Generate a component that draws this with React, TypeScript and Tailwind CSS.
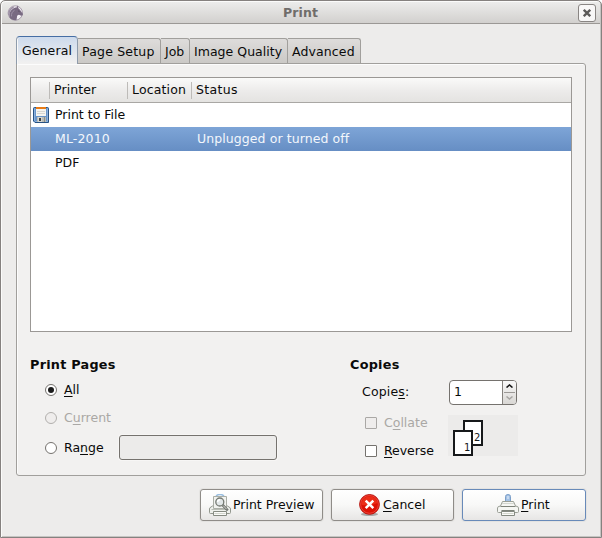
import React from "react";

const INACTIVE_TABS = [
  { label: "Page Setup", width: "w-[83px]", tracking: "tracking-[0.2px]" },
  { label: "Job", width: "w-[29px]", tracking: "tracking-[0px]" },
  { label: "Image Quality", width: "w-[98px]", tracking: "tracking-[0.03px]" },
  { label: "Advanced", width: "w-[73px]", tracking: "tracking-[0.12px]" },
];

function U({ children }: { children: React.ReactNode }) {
  return <span className="underline decoration-1 underline-offset-2">{children}</span>;
}

function HorseIcon() {
  return (
    <svg width="18" height="18" viewBox="0 0 18 18" className="block">
      <circle cx="8.3" cy="9" r="7.2" fill="#f3eff5" stroke="#a79cab" strokeWidth="1" />
      <path
        d="M2.6 13.6 C1.6 10.6 2.6 7 5.6 5 C7 4 8.6 3.6 9.6 3.6 L10.8 1.4 L11.4 4.2 C13 5.2 13.8 7 15.8 9.8 C16.2 10.8 15.4 12 14.2 11.8 L12 10.8 C10.6 11 9.8 11.8 10 13 L9.4 16.2 C6.6 16.6 3.8 15.6 2.6 13.6Z"
        fill="#796a82"
      />
      <path d="M1.9 11 C1.8 7.4 3.6 4.4 6.6 3" fill="none" stroke="#9c8fa4" strokeWidth="1.6" />
      <path d="M4.6 12.4 C4.2 9.6 5.2 7.6 7.6 6.2" fill="none" stroke="#a295aa" strokeWidth=".9" />
      <path d="M11.4 7 L12.4 7.6" fill="none" stroke="#463a4d" strokeWidth=".9" />
    </svg>
  );
}

function FloppyIcon() {
  return (
    <svg width="16" height="16" viewBox="0 0 16 16">
      <path d="M1.5 .5 H14.5 Q15.5 .5 15.5 1.5 V15.5 H2 L.5 14 V1.5 Q.5 .5 1.5 .5Z" fill="#6794c9" stroke="#285384" />
      <path d="M1.5 1.5 V13.6 L2.5 14.5 H14.5 V1.5" fill="none" stroke="#8cb2df" />
      <rect x="3" y="0" width="10" height="9" fill="#f4f4f0" />
      <rect x="3" y="0" width="10" height="2" fill="#e77b17" />
      <path d="M4 4.5 H12 M4 6.5 H12" stroke="#d6d6d2" />
      <rect x="4" y="10" width="9" height="5" fill="#b9bbb6" />
      <rect x="5" y="10" width="4" height="5" fill="#d5d6d2" />
      <rect x="6" y="11" width="2" height="3" fill="#3b4041" />
      <path d="M11.5 10 V15" stroke="#8b8e88" />
    </svg>
  );
}

function PrinterIcon({ preview = false }: { preview?: boolean }) {
  return (
    <svg width="22" height="22" viewBox="0 0 22 22" className="shrink-0">
      {preview ? (
        <>
          <path d="M7 2 Q11 -1.2 15 2" fill="none" stroke="#98bddf" strokeWidth="1.5" />
          <path
            d="M3.5 12 L2 13 Q.5 13.6 .5 15 V18.5 Q.5 19.5 1.5 19.5 H20.5 Q21.5 19.5 21.5 18.5 V15 Q21.5 13.6 20 13 L18.5 12Z"
            fill="#eef0ec"
            stroke="#92978e"
          />
          <path d="M4.5 14.5 V2.5 H17.5 V14.5Z" fill="#f1f2ef" stroke="#aaaea6" />
          <path d="M2.5 15.5 H19.5" stroke="#b9bdb5" />
        </>
      ) : (
        <>
          <path d="M8.5 8 V2.5 Q8.5 .5 11 .5 Q13.5 .5 13.5 2.5 V8" fill="#a3c1e4" stroke="#7c9fc9" />
          <path d="M11 2 V5" stroke="#e9f1fa" />
          <path
            d="M5.5 7.5 H16.5 L18.5 12 Q21.5 12.2 21.5 14 V17.5 Q21.5 18.5 20.5 18.5 H1.5 Q.5 18.5 .5 17.5 V14 Q.5 12.2 3.5 12Z"
            fill="#f5f6f3"
            stroke="#9a9f96"
          />
          <path d="M5 9.5 H17" stroke="#d3d6cf" />
          <path d="M3.5 12.5 H18.5" stroke="#7e837a" />
          <path d="M4.5 16.5 H17.5" stroke="#7d827a" />
        </>
      )}
      <path d="M4.5 21.5 V17.5 H17.5 V21.5Z" fill="#fafaf8" stroke="#858a81" />
      <path d="M5.5 19.5 H16.5" stroke="#d3d7ce" />
      {preview && (
        <>
          <path d="M13.6 11 L18 15.6" stroke="#6f736e" strokeWidth="2.6" strokeLinecap="round" />
          <path d="M14.2 11.6 L17.6 15.2" stroke="#d9dad6" strokeWidth="1" />
          <circle cx="10.8" cy="8" r="4" fill="#e2e7e8" stroke="#757a73" strokeWidth="1.3" />
          <path d="M8.6 8 Q8.8 5.8 11 5.8" fill="none" stroke="#fff" strokeWidth="1.4" />
        </>
      )}
    </svg>
  );
}

function CancelIcon() {
  return (
    <svg width="22" height="22" viewBox="0 0 22 22" className="shrink-0">
      <ellipse cx="10.5" cy="20.2" rx="8.5" ry="1.8" fill="#858585" opacity=".65" />
      <circle cx="10.5" cy="10.4" r="9.9" fill="#dc1206" stroke="#b00b05" strokeWidth=".9" />
      <circle cx="10.5" cy="10.4" r="8.9" fill="none" stroke="#ee4a3f" strokeWidth=".9" />
      <path d="M2.5 9 Q4 2.6 10.5 2.2 Q17 2.6 18.5 9 Q12.5 12 2.5 11Z" fill="#f23c22" opacity=".65" />
      <path d="M6.7 6.6 L14.3 14.2 M14.3 6.6 L6.7 14.2" stroke="#fff" strokeWidth="2.5" />
    </svg>
  );
}

function CollateIcon() {
  return (
    <svg width="70" height="41" viewBox="0 0 70 41" className="block">
      <rect width="70" height="41" fill="#ecebea" />
      <rect x="16" y="6" width="18" height="24" fill="#fff" stroke="#17191b" strokeWidth="2" />
      <text x="26" y="26" fontFamily="DejaVu Sans" fontSize="10" fill="#17191b">2</text>
      <rect x="6" y="16" width="18" height="24" fill="#fff" stroke="#17191b" strokeWidth="2" />
      <text x="16" y="36" fontFamily="DejaVu Sans" fontSize="10" fill="#17191b">1</text>
    </svg>
  );
}

function Radio({ checked = false, disabled = false }: { checked?: boolean; disabled?: boolean }) {
  return (
    <span
      className={`flex size-[12px] items-center justify-center rounded-full border ${
        disabled ? "border-[#b2b0ad] bg-[#efedec]" : "border-[#75726e] bg-white"
      }`}
    >
      {checked && <span className="size-[6px] rounded-full bg-[#1b1b1b]" />}
    </span>
  );
}

function Check({ disabled = false }: { disabled?: boolean }) {
  return (
    <span
      className={`size-[12px] rounded-[1px] border ${
        disabled ? "border-[#aaa8a5] bg-[#efedec]" : "border-[#75726e] bg-white"
      }`}
    />
  );
}

const BUTTON =
  "flex h-[32px] items-center rounded-[3px] border bg-linear-to-b from-white via-[#f8f8f7] via-50% to-[#e7e6e5] shadow-[0_0_0_1px_#e4e3e1]";

export default function App() {
  return (
    <div className="h-[538px] w-[602px] overflow-hidden bg-white font-['DejaVu_Sans',sans-serif] text-[12.5px] leading-[16px] text-[#0a0a0a]">
      <div className="flex h-full flex-col rounded-t-[5px] border border-[#85817f] bg-[#edeceb] shadow-[inset_1px_1px_0_#fbfbfa,inset_-1px_-1px_0_#c6c4c2]">
        <header className="mx-px mt-px flex h-[22px] shrink-0 items-center rounded-t-[4px] border-b border-[#9b9895] bg-linear-to-b from-[#ececeb] to-[#d2d0ce]">
          <div className="ml-[5px] w-[18px]">
            <HorseIcon />
          </div>
          <h1 className="flex-1 pr-[2px] text-center text-[12.5px] font-bold tracking-[0.1px] text-[#706d6b]">Print</h1>
          <button className="mr-[4px] flex size-[18px] items-center justify-center rounded-[3px] border border-[#898583] bg-[#f8f7f7]">
            <svg width="8" height="8" viewBox="0 0 8 8">
              <path d="M.8 .8 L7.2 7.2 M7.2 .8 L.8 7.2" stroke="#5c5a59" strokeWidth="2.3" />
            </svg>
          </button>
        </header>

        <nav className="relative z-10 ml-[15px] mt-[12px] flex h-[28px] shrink-0 items-end">
          <div className="h-[28px] w-[62px] rounded-t-[4px] border-x border-t border-x-[#8f9cac] border-t-[#466ea4] bg-linear-to-b from-[#cddaec] to-[#f2f1f0] pl-[5px] pt-[6px] whitespace-nowrap tracking-[0.1px] shadow-[inset_1px_0_0_#f9f9f9]">
            General
          </div>
          {INACTIVE_TABS.map((t) => (
            <div
              key={t.label}
              className={`mb-px h-[25px] rounded-tr-[3px] border-r border-t border-[#a19f9c] bg-linear-to-b from-[#dedcdb] to-[#cbc9c6] pl-[4px] pt-[5px] whitespace-nowrap ${t.width} ${t.tracking}`}
            >
              {t.label}
            </div>
          ))}
        </nav>

        <main className="-mt-px ml-[15px] flex h-[413px] w-[570px] shrink-0 flex-col rounded-b-[3px] rounded-tr-[3px] border border-[#a19f9c] bg-[#f2f1f0] px-[13px] pt-[13px] shadow-[inset_1px_1px_0_#fcfcfc]">
          <section className="h-[255px] w-[542px] shrink-0 border border-[#9b9895] bg-white whitespace-nowrap">
            <div className="flex h-[25px] items-center border-b border-[#a9a7a4] bg-linear-to-b from-[#fafaf9] via-[#ecebea] via-55% to-[#e4e3e1]">
              <div className="h-[17px] w-[19px] border-r border-[#bdbbb8]" />
              <div className="h-[17px] w-[78px] border-r border-[#bdbbb8] pl-[4px] tracking-[0.1px]">Printer</div>
              <div className="h-[17px] w-[64px] border-r border-[#bdbbb8] pl-[4px] tracking-[0.15px]">Location</div>
              <div className="h-[17px] pl-[4px] tracking-[0.35px]">Status</div>
            </div>
            <div className="flex h-[24px] items-center">
              <span className="ml-[2px] w-[22px]">
                <FloppyIcon />
              </span>
              <span>Print to File</span>
            </div>
            <div className="flex h-[24px] items-center bg-linear-to-b from-[#7ea5d7] to-[#668ec4] text-[#f3f7fc]">
              <span className="ml-[24px] w-[142px] tracking-[0.15px]">ML-2010</span>
              <span className="tracking-[0.08px]">Unplugged or turned off</span>
            </div>
            <div className="flex h-[24px] items-center pl-[24px]">PDF</div>
          </section>

          <div className="flex whitespace-nowrap">
            <section className="w-[320px] pt-[25px]">
              <h2 className="h-[16px] text-[12.8px] font-bold tracking-[0.25px]">Print Pages</h2>
              <div className="ml-[15px] mt-[8px] flex h-[18px] items-center gap-[7px]">
                <Radio checked />
                <span><U>A</U>ll</span>
              </div>
              <div className="ml-[15px] mt-[10px] flex h-[18px] items-center gap-[7px] text-[#aaa8a5]">
                <Radio disabled />
                <span>C<U>u</U>rrent</span>
              </div>
              <div className="ml-[15px] mt-[8px] flex h-[25px] items-center">
                <Radio />
                <span className="ml-[7px] w-[55px]">Ra<U>n</U>ge</span>
                <div className="h-[25px] w-[158px] rounded-[3px] border border-[#75726e] bg-[#ecebea] shadow-[0_0_0_1px_#f7f6f5]" />
              </div>
            </section>

            <section className="pt-[25px]">
              <h2 className="h-[16px] text-[12.8px] font-bold tracking-[0.25px]">Copies</h2>
              <div className="ml-[12px] mt-[6px] flex h-[26px] items-center">
                <span className="w-[87px] tracking-[0.15px]">Copie<U>s</U>:</span>
                <div className="flex h-[25px] w-[68px] overflow-hidden rounded-[4px] border border-[#75726e] bg-white">
                  <span className="flex w-[52px] items-center pl-[4px]">1</span>
                  <div className="flex w-[14px] flex-col items-center border-l border-[#85827e] bg-linear-to-b from-[#f9f9f9] to-[#d9d7d4]">
                    <span className="flex h-[11px] items-center">
                      <svg width="7" height="4" viewBox="0 0 7 4">
                        <path d="M.5 3.5 L3.5 1 L6.5 3.5" fill="none" stroke="#151515" strokeWidth="1.6" />
                      </svg>
                    </span>
                    <span className="h-px w-[11px] bg-[#9b9895]" />
                    <span className="flex h-[11px] items-center">
                      <svg width="7" height="4" viewBox="0 0 7 4">
                        <path d="M.5 .5 L3.5 3 L6.5 .5" fill="none" stroke="#a7a5a3" strokeWidth="1.5" />
                      </svg>
                    </span>
                  </div>
                </div>
              </div>
              <div className="ml-[15px] flex pt-[10px]">
                <div className="w-[83px]">
                  <div className="flex h-[16px] items-center gap-[7px] text-[#aaa8a5]">
                    <Check disabled />
                    <span>C<U>o</U>llate</span>
                  </div>
                  <div className="mt-[12px] flex h-[16px] items-center gap-[7px]">
                    <Check />
                    <span className="tracking-[-0.05px]"><U>R</U>everse</span>
                  </div>
                </div>
                <CollateIcon />
              </div>
            </section>
          </div>
        </main>

        <footer className="mt-[13px] flex justify-end gap-[8px] pr-[15px] whitespace-nowrap">
          <button className={`${BUTTON} w-[123px] border-[#8f8c88] pl-[8px]`}>
            <PrinterIcon preview />
            <span className="ml-[2px]">Print Pre<U>v</U>iew</span>
          </button>
          <button className={`${BUTTON} w-[123px] border-[#8f8c88] pl-[27px]`}>
            <CancelIcon />
            <span className="ml-[2px]"><U>C</U>ancel</span>
          </button>
          <button className={`${BUTTON} w-[124px] border-[#688ab9] pl-[34px]`}>
            <PrinterIcon />
            <span className="ml-[2px]"><U>P</U>rint</span>
          </button>
        </footer>
      </div>
    </div>
  );
}
